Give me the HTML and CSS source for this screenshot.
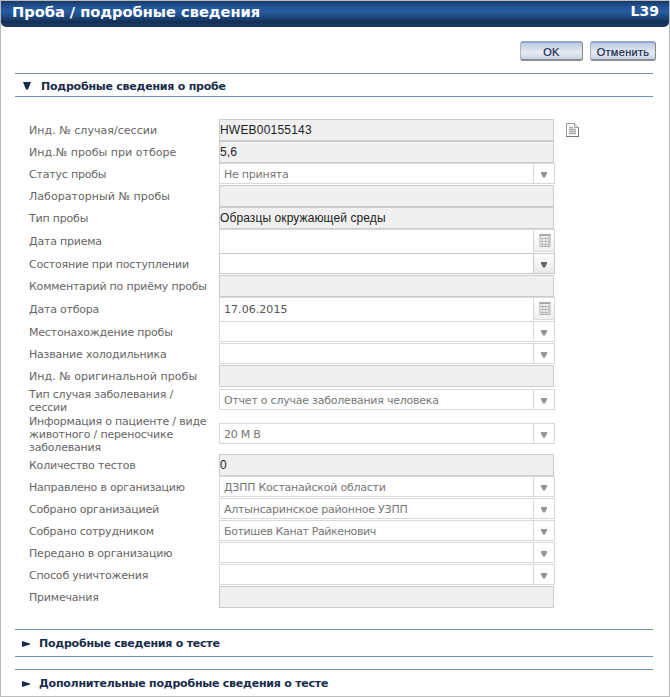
FILE: index.html
```html
<!DOCTYPE html>
<html lang="ru">
<head>
<meta charset="utf-8">
<title>Проба / подробные сведения</title>
<link rel="stylesheet" href="styles.css">
</head>
<body>
<svg class="defs" width="0" height="0">
  <symbol id="cal" viewBox="0 0 12 13">
    <path d="M1 .5h10v12h-10z" fill="#f1f1f1" stroke="#b0b0b0"/>
    <path d="M.5 1h11" stroke="#aaa" stroke-width="2"/>
    <path d="M2 4.5h8M2 7.5h8M2 10.5h8M3.5 3v9M6.5 3v9M9.5 3v9" stroke="#bbb"/>
  </symbol>
  <symbol id="arr" viewBox="0 0 6 6"><path d="M0 0h6v1.500L4 5.5H2L0 1.500z" fill="currentColor"/></symbol>
</svg>
<div class="window">
  <header class="title"><span class="name">Проба / подробные сведения</span><span>L39</span></header>
  <div class="actions"><button class="ok">OK</button><button class="cancel">Отменить</button></div>
  <h2 class="section open"><svg width="8" height="8"><path d="M0 0h8L5 7.5H3z" fill="currentColor"/></svg><span>Подробные сведения о пробе</span></h2>
  <div class="form">
    <div class="row"><label class="num">Инд. № случая/сессии</label><div class="text code">HWEB00155143</div>
      <svg class="doc" width="13" height="14"><path d="M.5.5h8l4 4v9H.5z" fill="#fff" stroke="#999"/><path d="M8.500.5v4h4" fill="#eee" stroke="#999"/><path d="M3 4.500h4M3 6.500h7M3 8.500h7M3 10.500h7" stroke="#aaa" stroke-width="1.500"/><path d="M0 13.500h13M12.500 5v9" stroke="#777"/></svg></div>
    <div class="row"><label class="num">Инд.№ пробы при отборе</label><div class="text">5,6</div></div>
    <div class="row"><label>Статус пробы</label><div class="combo"><span>Не принята</span><i><svg><use href="#arr"/></svg></i></div></div>
    <div class="row"><label class="num">Лабораторный № пробы</label><div class="text"></div></div>
    <div class="row"><label>Тип пробы</label><div class="text">Образцы окружающей среды</div></div>
    <div class="row dated"><label>Дата приема</label><div class="date"><span></span><i><svg><use href="#cal"/></svg></i></div></div>
    <div class="row"><label>Состояние при поступлении</label><div class="combo active"><span></span><i><svg><use href="#arr"/></svg></i></div></div>
    <div class="row"><label>Комментарий по приёму пробы</label><div class="text"></div></div>
    <div class="row dated"><label>Дата отбора</label><div class="date"><span>17.06.2015</span><i><svg><use href="#cal"/></svg></i></div></div>
    <div class="row"><label>Местонахождение пробы</label><div class="combo"><span></span><i><svg><use href="#arr"/></svg></i></div></div>
    <div class="row"><label>Название холодильника</label><div class="combo"><span></span><i><svg><use href="#arr"/></svg></i></div></div>
    <div class="row"><label class="num">Инд. № оригинальной пробы</label><div class="text"></div></div>
    <div class="row two"><label>Тип случая заболевания /<br>сессии</label><div class="combo"><span>Отчет о случае заболевания человека</span><i><svg><use href="#arr"/></svg></i></div></div>
    <div class="row three"><label>Информация о пациенте / виде<br>животного / переносчике<br>заболевания</label><div class="combo"><span>20 М В</span><i><svg><use href="#arr"/></svg></i></div></div>
    <div class="row"><label>Количество тестов</label><div class="text">0</div></div>
    <div class="row"><label>Направлено в организацию</label><div class="combo"><span>ДЗПП Костанайской области</span><i><svg><use href="#arr"/></svg></i></div></div>
    <div class="row"><label>Собрано организацией</label><div class="combo"><span>Алтынсаринское районное УЗПП</span><i><svg><use href="#arr"/></svg></i></div></div>
    <div class="row"><label>Собрано сотрудником</label><div class="combo"><span class="tight">Ботишев Канат Райкенович</span><i><svg><use href="#arr"/></svg></i></div></div>
    <div class="row"><label>Передано в организацию</label><div class="combo"><span></span><i><svg><use href="#arr"/></svg></i></div></div>
    <div class="row"><label>Способ уничтожения</label><div class="combo"><span></span><i><svg><use href="#arr"/></svg></i></div></div>
    <div class="row"><label>Примечания</label><div class="text"></div></div>
  </div>
  <h2 class="section closed"><svg width="8" height="6"><path d="M0 0l8 2.500v1L0 6z" fill="currentColor"/></svg><span>Подробные сведения о тесте</span></h2>
  <h2 class="section closed last"><svg width="8" height="6"><path d="M0 0l8 2.500v1L0 6z" fill="currentColor"/></svg><span>Дополнительные подробные сведения о тесте</span></h2>
</div>
</body>
</html>
```
FILE: styles.css
```css
* { box-sizing: border-box; }
body { margin: 0; background: #fff; font: 11px/13px "DejaVu Sans", Verdana, sans-serif; color: #666; }
.defs { display: block; }
.window { width: 670px; height: 697px; border: 1px solid #bbb; overflow: hidden; }
.title {
  display: flex; justify-content: space-between; height: 26px; padding: 1px 10px 0 11px;
  border-radius: 0 0 5px 5px; color: #fff; font-size: 14px; line-height: 19px; font-weight: bold;
  background: linear-gradient(#173963 0, #20508f 5px, #275da4 10px, #20508c 14px, #152f55 21px, #1b3c6b 26px);
}
.name { font-size: 14.6px; }
.actions { display: flex; justify-content: flex-end; gap: 7px; padding: 14px 13px 0 0; height: 46px; }
button {
  height: 20px; padding: 2px 0 0; border: 1px solid #a9b6c8; border-top: 2px solid #91a9cb;
  border-right-color: #888; border-bottom: 2px solid #8b8d91; border-radius: 3px;
  background: linear-gradient(#bccbdf, #e6ebf3 60%, #c6d2e3);
  color: #152b4d; font: 11px/13px "Liberation Sans", Arial, sans-serif; letter-spacing: .3px;
  -webkit-text-stroke: .2px #152b4d;
}
.ok { width: 63px; }
.cancel { width: 66px; }
.section {
  display: flex; align-items: center; width: 638px; margin: 0 0 0 14px; padding-left: 8px;
  border: solid #7092c2; border-width: 1px 0; color: #182b4a; font-size: 11px; font-weight: bold;
  letter-spacing: -.23px;
}
.open { height: 24px; padding-top: 2px; gap: 10px; }
.closed { height: 28px; padding-left: 7px; gap: 9px; margin-bottom: 12px; }
.closed svg { margin-top: 1px; }
.last { border-bottom: 0; height: 27px; margin-bottom: 0; }
.form { padding: 22px 0 21px 28px; }
.row { display: flex; height: 22px; }
.dated { height: 24px; }
.two { height: 27px; }
.three { height: 40px; }
label { width: 190px; align-self: center; white-space: nowrap; letter-spacing: -.2px; }
.num { letter-spacing: .04px; }
.text {
  width: 335px; height: 22px; border: 1px solid #ccc; background: #f0f0f0;
  color: #222; font: 12px/20px "Liberation Sans", Arial, sans-serif; letter-spacing: .1px;
}
.code { letter-spacing: .2px; }
.combo, .date { display: flex; width: 336px; height: 21px; border: 1px solid #d9d9d9; color: #777; }
.combo span, .date span { flex: 1; padding-left: 4px; line-height: 21px; }
.combo span { letter-spacing: -.23px; }
.combo .tight { letter-spacing: -.38px; }
.combo i, .date i { width: 21px; border-left: 1px solid #d9d9d9; display: flex; align-items: center; justify-content: center; color: #959595; }
.combo svg { width: 6px; height: 6px; margin-top: 3px; }
.active { border-color: #c8c8c8; }
.active i { color: #666; border-color: #c8c8c8; background: linear-gradient(#fff, #e9e9e9); }
.date { height: 24px; border-bottom: 0; color: #555; }
.date span { line-height: 23px; letter-spacing: .05px; }
.date i { background: linear-gradient(#fff, #eee); border-bottom: 1px solid #d9d9d9; height: 22px; }
.date svg { width: 12px; height: 13px; margin: 0 0 1px 2px; }
.two .combo { margin-top: 2px; }
.three .combo { margin-top: 9px; }
.doc { margin: 4px 0 0 12px; }
```
